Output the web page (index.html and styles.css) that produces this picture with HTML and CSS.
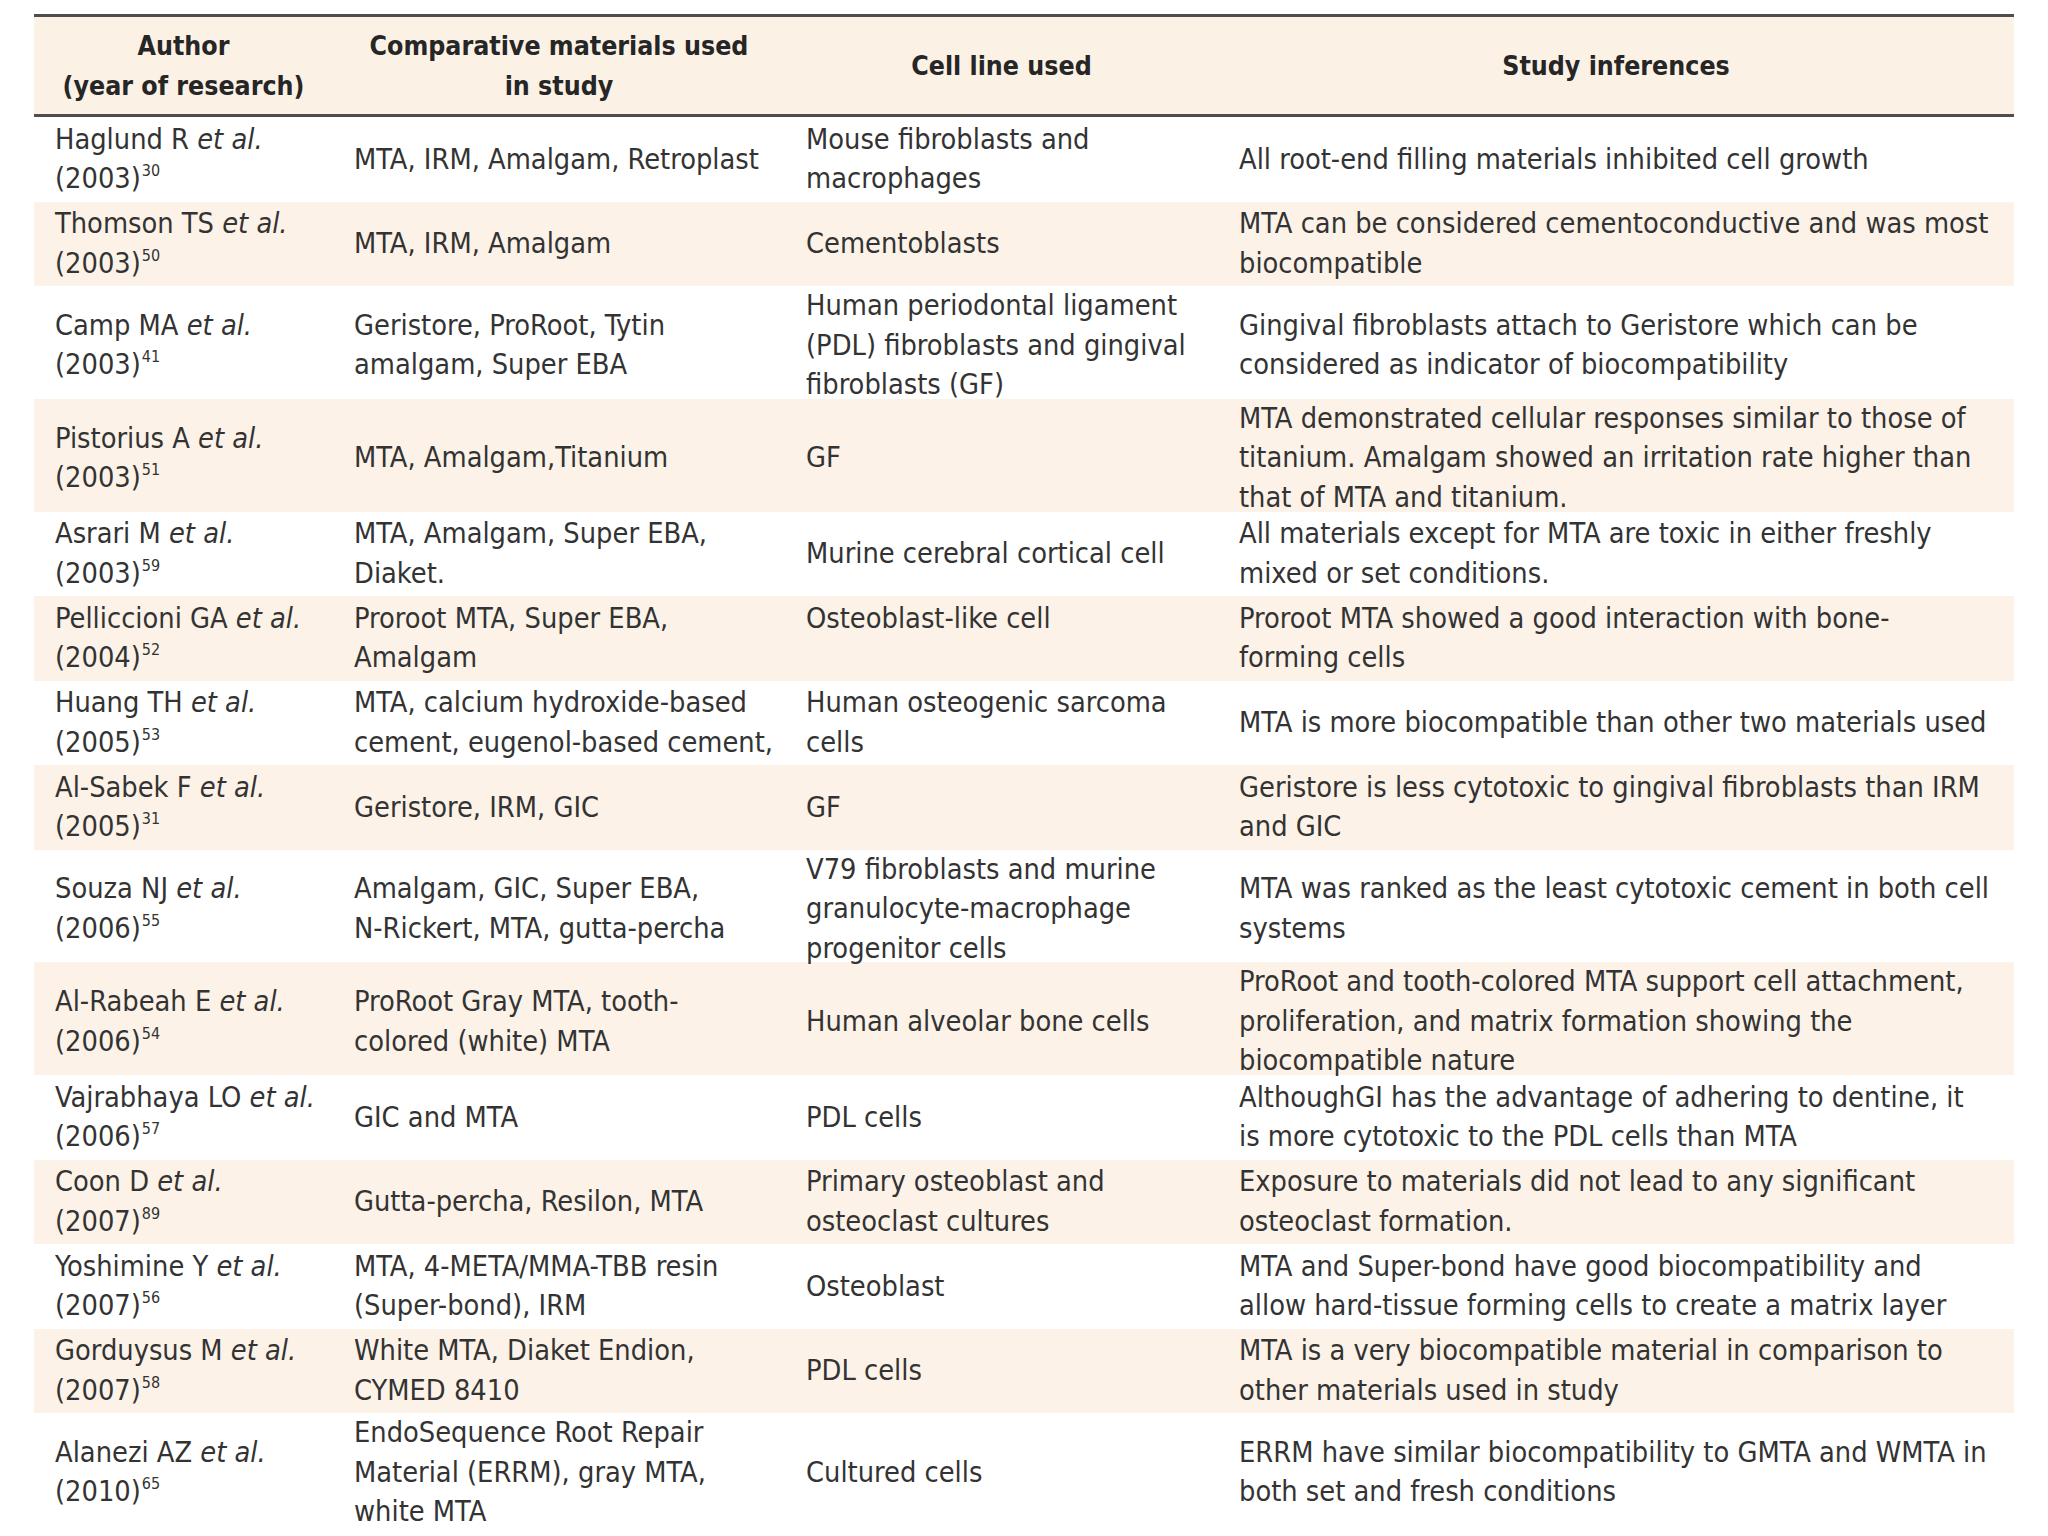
FILE: index.html
```html
<!DOCTYPE html>
<html lang="en">
<head>
<meta charset="utf-8">
<title>Biocompatibility studies of root-end filling materials</title>
<link rel="stylesheet" href="styles.css">
</head>
<body>
<div class="table">
  <div class="head">
    <div class="hcell">Author<br>(year of research)</div>
    <div class="hcell">Comparative materials used<br>in study</div>
    <div class="hcell">Cell line used</div>
    <div class="hcell">Study inferences</div>
  </div>

  <div class="row r2">
    <div class="cell">Haglund R <i>et al.</i><br>(2003)<sup>30</sup></div>
    <div class="cell">MTA, IRM, Amalgam, Retroplast</div>
    <div class="cell">Mouse fibroblasts and<br>macrophages</div>
    <div class="cell">All root-end filling materials inhibited cell growth</div>
  </div>

  <div class="row r2 alt">
    <div class="cell">Thomson TS <i>et al.</i><br>(2003)<sup>50</sup></div>
    <div class="cell">MTA, IRM, Amalgam</div>
    <div class="cell">Cementoblasts</div>
    <div class="cell">MTA can be considered cementoconductive and was most<br>biocompatible</div>
  </div>

  <div class="row r3">
    <div class="cell">Camp MA <i>et al.</i><br>(2003)<sup>41</sup></div>
    <div class="cell">Geristore, ProRoot, Tytin<br>amalgam, Super EBA</div>
    <div class="cell">Human periodontal ligament<br>(PDL) fibroblasts and gingival<br>fibroblasts (GF)</div>
    <div class="cell">Gingival fibroblasts attach to Geristore which can be<br>considered as indicator of biocompatibility</div>
  </div>

  <div class="row r3 alt">
    <div class="cell">Pistorius A <i>et al.</i><br>(2003)<sup>51</sup></div>
    <div class="cell">MTA, Amalgam,Titanium</div>
    <div class="cell">GF</div>
    <div class="cell">MTA demonstrated cellular responses similar to those of<br>titanium. Amalgam showed an irritation rate higher than<br>that of MTA and titanium.</div>
  </div>

  <div class="row r2">
    <div class="cell">Asrari M <i>et al.</i><br>(2003)<sup>59</sup></div>
    <div class="cell">MTA, Amalgam, Super EBA,<br>Diaket.</div>
    <div class="cell">Murine cerebral cortical cell</div>
    <div class="cell">All materials except for MTA are toxic in either freshly<br>mixed or set conditions.</div>
  </div>

  <div class="row r2 alt">
    <div class="cell">Pelliccioni GA <i>et al.</i><br>(2004)<sup>52</sup></div>
    <div class="cell">Proroot MTA, Super EBA,<br>Amalgam</div>
    <div class="cell top">Osteoblast-like cell</div>
    <div class="cell">Proroot MTA showed a good interaction with bone-<br>forming cells</div>
  </div>

  <div class="row r2">
    <div class="cell">Huang TH <i>et al.</i><br>(2005)<sup>53</sup></div>
    <div class="cell">MTA, calcium hydroxide-based<br>cement, eugenol-based cement,</div>
    <div class="cell">Human osteogenic sarcoma<br>cells</div>
    <div class="cell">MTA is more biocompatible than other two materials used</div>
  </div>

  <div class="row r2 alt">
    <div class="cell">Al-Sabek F <i>et al.</i><br>(2005)<sup>31</sup></div>
    <div class="cell">Geristore, IRM, GIC</div>
    <div class="cell">GF</div>
    <div class="cell">Geristore is less cytotoxic to gingival fibroblasts than IRM<br>and GIC</div>
  </div>

  <div class="row r3">
    <div class="cell">Souza NJ <i>et al.</i><br>(2006)<sup>55</sup></div>
    <div class="cell">Amalgam, GIC, Super EBA,<br>N-Rickert, MTA, gutta-percha</div>
    <div class="cell">V79 fibroblasts and murine<br>granulocyte-macrophage<br>progenitor cells</div>
    <div class="cell">MTA was ranked as the least cytotoxic cement in both cell<br>systems</div>
  </div>

  <div class="row r3 alt">
    <div class="cell">Al-Rabeah E <i>et al.</i><br>(2006)<sup>54</sup></div>
    <div class="cell">ProRoot Gray MTA, tooth-<br>colored (white) MTA</div>
    <div class="cell">Human alveolar bone cells</div>
    <div class="cell">ProRoot and tooth-colored MTA support cell attachment,<br>proliferation, and matrix formation showing the<br>biocompatible nature</div>
  </div>

  <div class="row r2">
    <div class="cell">Vajrabhaya LO <i>et al.</i><br>(2006)<sup>57</sup></div>
    <div class="cell">GIC and MTA</div>
    <div class="cell">PDL cells</div>
    <div class="cell">AlthoughGI has the advantage of adhering to dentine, it<br>is more cytotoxic to the PDL cells than MTA</div>
  </div>

  <div class="row r2 alt">
    <div class="cell">Coon D <i>et al.</i><br>(2007)<sup>89</sup></div>
    <div class="cell">Gutta-percha, Resilon, MTA</div>
    <div class="cell">Primary osteoblast and<br>osteoclast cultures</div>
    <div class="cell">Exposure to materials did not lead to any significant<br>osteoclast formation.</div>
  </div>

  <div class="row r2">
    <div class="cell">Yoshimine Y <i>et al.</i><br>(2007)<sup>56</sup></div>
    <div class="cell">MTA, 4-META/MMA-TBB resin<br>(Super-bond), IRM</div>
    <div class="cell">Osteoblast</div>
    <div class="cell">MTA and Super-bond have good biocompatibility and<br>allow hard-tissue forming cells to create a matrix layer</div>
  </div>

  <div class="row r2 alt">
    <div class="cell">Gorduysus M <i>et al.</i><br>(2007)<sup>58</sup></div>
    <div class="cell">White MTA, Diaket Endion,<br>CYMED 8410</div>
    <div class="cell">PDL cells</div>
    <div class="cell">MTA is a very biocompatible material in comparison to<br>other materials used in study</div>
  </div>

  <div class="row r3">
    <div class="cell">Alanezi AZ <i>et al.</i><br>(2010)<sup>65</sup></div>
    <div class="cell">EndoSequence Root Repair<br>Material (ERRM), gray MTA,<br>white MTA</div>
    <div class="cell">Cultured cells</div>
    <div class="cell">ERRM have similar biocompatibility to GMTA and WMTA in<br>both set and fresh conditions</div>
  </div>
</div>
</body>
</html>
```

FILE: styles.css
```css
html, body {
  margin: 0;
  padding: 0;
  background: #ffffff;
}

body {
  font-family: "DejaVu Sans Condensed", "DejaVu Sans", sans-serif;
  font-stretch: condensed;
  font-size: 28.7px;
  line-height: 39.5px;
  color: #333333;
}

.table {
  width: 1980px;
  margin: 14px 0 0 34px;
}

.head,
.row {
  display: grid;
  grid-template-columns: 299px 452px 433px 796px;
  align-items: center;
}

.head {
  height: 97px;
  background: #fbf1e5;
  border-top: 3px solid #4e4e4e;
  border-bottom: 3px solid #4e4e4e;
}

.hcell {
  text-align: center;
  font-weight: bold;
  font-size: 26.5px;
  color: #262626;
}

.row {
  background: #ffffff;
}

.row.alt {
  background: #fcf2e7;
}

.row.r2 {
  height: 84.5px;
}

.row.r3 {
  height: 112.75px;
}

.cell {
  padding-left: 21px;
  white-space: nowrap;
}

.cell.top {
  align-self: start;
  padding-top: 3px;
}

.cell i {
  font-style: italic;
}

.cell sup {
  font-size: 16px;
  line-height: 0;
  vertical-align: 12px;
  margin-left: 1px;
}
```
